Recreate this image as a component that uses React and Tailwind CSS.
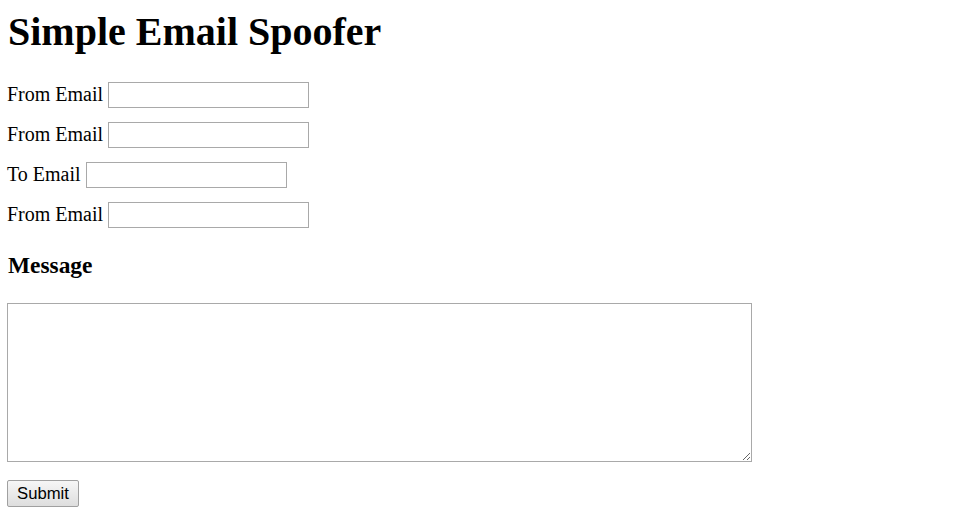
import React from "react";

const serif = { fontFamily: '"Liberation Serif", "Times New Roman", serif' };

// one label + input line of the form
const FieldRow = ({ label }) => (
  <div className="flex items-center h-[26px] mb-[14px]">
    <label className="text-[20px] leading-[22px] text-black mt-[-2px]">{label}</label>
    <input
      type="text"
      className="ml-[5px] w-[201px] h-[26px] border border-[#a9a9a9] bg-white outline-none"
    />
  </div>
);

const App = () => {
  return (
    <div className="min-h-[515px] bg-white text-black pl-[7px] pt-[10px]" style={serif}>
      <h1 className="text-[40px] leading-[44px] font-bold ml-[1px]">Simple Email Spoofer</h1>

      <form className="mt-[28px]" onSubmit={(e) => e.preventDefault()}>
        <FieldRow label="From Email" />
        <FieldRow label="From Email" />
        <FieldRow label="To Email" />
        <FieldRow label="From Email" />

        <h3 className="text-[23.4px] leading-[26px] font-bold ml-[1px] mt-[24px]">Message</h3>

        <textarea className="block mt-[25px] w-[745px] h-[159px] border border-[#a9a9a9] bg-white outline-none resize" />

        <button
          type="submit"
          className="mt-[18px] w-[72px] h-[27px] border border-[#a0a0a0] rounded-[2px] bg-gradient-to-b from-[#f6f6f6] to-[#dedede] text-[16.7px] leading-[20px] text-black"
          style={{ fontFamily: '"Liberation Sans", Arial, sans-serif' }}
        >
          Submit
        </button>
      </form>
    </div>
  );
};

export default App;
